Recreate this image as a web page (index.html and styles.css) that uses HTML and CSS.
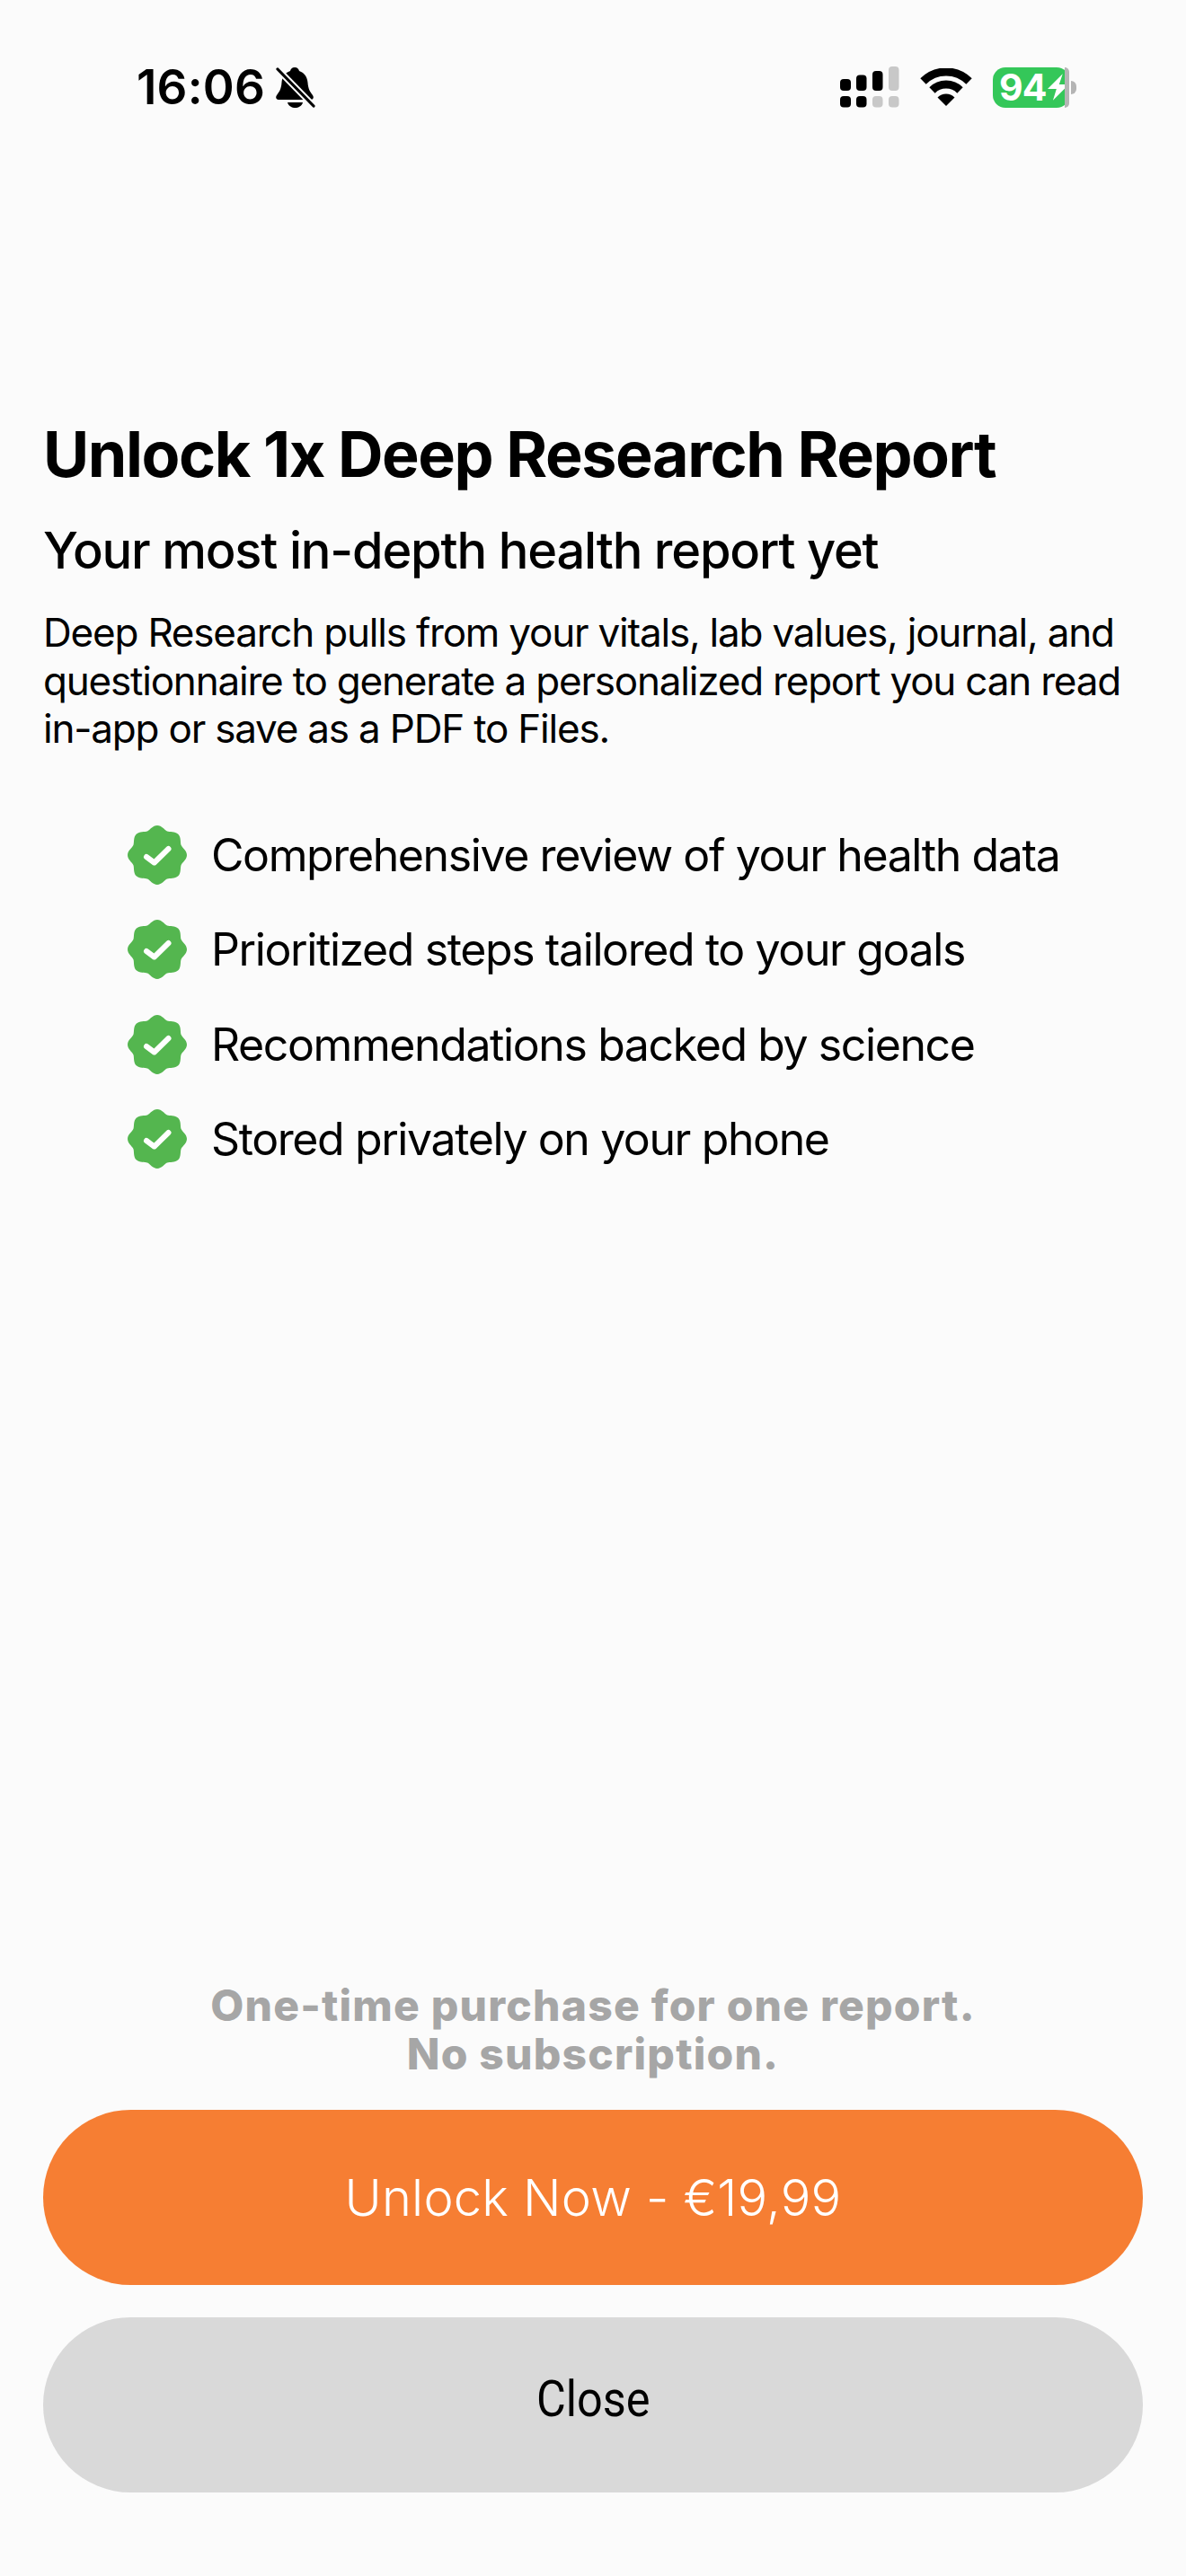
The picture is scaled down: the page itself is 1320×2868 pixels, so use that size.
FILE: index.html
```html
<!DOCTYPE html>
<html lang="en">
<head>
<meta charset="utf-8">
<title>Unlock Deep Research Report</title>
<link rel="stylesheet" href="styles.css">
</head>
<body>
<svg class="defs" width="0" height="0" aria-hidden="true">
  <symbol id="badge" viewBox="0 0 66 66">
    <path fill="#54b64f" d="M33 0C38 0 41.25 5.24 44.02 6.39C46.79 7.54 52.79 6.13 56.33 9.67C59.87 13.21 58.46 19.21 59.61 21.98C60.76 24.75 66 28 66 33C66 38 60.76 41.25 59.61 44.02C58.46 46.79 59.87 52.79 56.33 56.33C52.79 59.87 46.79 58.46 44.02 59.61C41.25 60.76 38 66 33 66C28 66 24.75 60.76 21.98 59.61C19.21 58.46 13.21 59.87 9.67 56.33C6.13 52.79 7.54 46.79 6.39 44.02C5.24 41.25 0 38 0 33C0 28 5.24 24.75 6.39 21.98C7.54 19.21 6.13 13.21 9.67 9.67C13.21 6.13 19.21 7.54 21.98 6.39C24.75 5.24 28 0 33 0Z"/>
    <path fill="none" stroke="#fff" stroke-width="6" stroke-linecap="round" stroke-linejoin="round" d="M21 35L29.7 41.5L45.5 26"/>
  </symbol>
</svg>
<main class="screen">
  <header class="status">
    <div class="status-left">
      <span class="time">16:06</span>
      <svg class="bell" viewBox="0 0 44 46" width="44" height="46">
        <path d="M21 1C24 1 25.500 3 26 5C32 7 35 12 35.500 18C36 25 38 28 41 32C42.500 34 42 37 39 37H3C0 37 -.5 34 1 32C4 28 6 25 6.500 18C7 12 10 7 16 5C16.500 3 18 1 21 1Z"/>
        <path d="M13 40H30C29 44 25 46 21.500 46C18 46 14 44 13 40Z"/>
        <path d="M2 3L42 44" stroke="#fbfbfb" stroke-width="7"/>
        <path d="M2 3L42 44" stroke="#000" stroke-width="3.200" stroke-linecap="round"/>
      </svg>
    </div>
    <div class="status-right">
      <svg class="signal" viewBox="0 0 66 46" width="66" height="46">
        <rect x="0" y="14" width="12" height="13" rx="4"/>
        <rect x="18" y="9.500" width="11.500" height="17.500" rx="4"/>
        <rect x="36" y="5" width="11.500" height="22" rx="4"/>
        <rect class="off" x="54" y="0" width="11.500" height="27" rx="4"/>
        <rect x="0" y="33" width="12" height="12.500" rx="4"/>
        <rect x="18" y="33" width="11.500" height="12.500" rx="4"/>
        <rect class="off" x="36" y="33" width="11.500" height="12.500" rx="4"/>
        <rect class="off" x="54" y="33" width="11.500" height="12.500" rx="4"/>
      </svg>
      <svg class="wifi" viewBox="0 0 58 42" width="58" height="42">
        <path d="M3.500 14.500A36 36 0 0 1 54.500 14.500" fill="none" stroke="#000" stroke-width="9"/>
        <path d="M13.500 24.500A22 22 0 0 1 44.500 24.500" fill="none" stroke="#000" stroke-width="9"/>
        <path d="M29 42L19.500 32.500A13.500 13.500 0 0 1 38.500 32.500Z"/>
      </svg>
      <div class="battery">
        <div class="cell">
          <span class="level">94</span>
          <svg class="bolt" viewBox="0 0 24 30" width="24" height="30">
            <path fill="#fff" d="M17 0L0 17H10L6 30L24 12H13Z"/>
          </svg>
          <span class="drain"></span>
        </div>
        <span class="nub"></span>
      </div>
    </div>
  </header>

  <section class="intro">
    <h1 class="title">Unlock 1x Deep Research Report</h1>
    <h2 class="subtitle">Your most in-depth health report yet</h2>
    <p class="lead">Deep Research pulls from your vitals, lab values, journal, and questionnaire to generate a personalized report you can read in-app or save as a PDF to Files.</p>
  </section>

  <ul class="features">
    <li class="feature"><svg class="check" width="66" height="66"><use href="#badge"/></svg><span>Comprehensive review of your health data</span></li>
    <li class="feature"><svg class="check" width="66" height="66"><use href="#badge"/></svg><span>Prioritized steps tailored to your goals</span></li>
    <li class="feature"><svg class="check" width="66" height="66"><use href="#badge"/></svg><span>Recommendations backed by science</span></li>
    <li class="feature"><svg class="check" width="66" height="66"><use href="#badge"/></svg><span>Stored privately on your phone</span></li>
  </ul>

  <footer class="actions">
    <p class="note">One-time purchase for one report.<br>No subscription.</p>
    <button class="btn btn-primary" type="button">Unlock Now - €19,99</button>
    <button class="btn btn-secondary" type="button"><span class="close-label">Close</span></button>
  </footer>
</main>
</body>
</html>
```

FILE: styles.css
```css
* { box-sizing: border-box; }
html, body { margin: 0; padding: 0; }
body {
  width: 1320px;
  height: 2868px;
  background: #fbfbfb;
  color: #000;
  font-family: Inter, "Liberation Sans", sans-serif;
  overflow: hidden;
}
.defs { display: block; }
.screen {
  display: flex;
  flex-direction: column;
  height: 2868px;
  padding: 0 48px 93px;
}

/* status bar */
.status {
  display: flex;
  justify-content: space-between;
  align-items: center;
  height: 46px;
  margin-top: 74px;
  padding: 0 74px 0 104px;
}
.status-left { display: flex; align-items: center; gap: 12px; }
.time { font-size: 53px; line-height: 46px; font-weight: 600; letter-spacing: 0.2px; }
.bell { display: block; }
.status-right { display: flex; align-items: center; gap: 23px; }
.signal, .wifi { display: block; }
.signal .off { fill: #c8c8c8; }
.battery { display: flex; align-items: center; gap: 2px; }
.cell {
  position: relative;
  display: flex;
  align-items: center;
  width: 85px;
  height: 45px;
  padding-left: 7px;
  border-radius: 14px;
  background: #34c759;
}
.level { color: #fff; font-size: 41px; line-height: 45px; font-weight: 700; letter-spacing: -1px; }
.bolt { display: block; margin-left: 2px; position: relative; z-index: 1; }
.drain { position: absolute; top: 0; right: 0; bottom: 0; width: 5px; border-radius: 0 14px 14px 0; background: #b4b4b4; z-index: 2; }
.nub { width: 6px; height: 15px; border-radius: 0 6px 6px 0; background: #b4b4b4; }

/* intro */
.intro { margin-top: 346px; }
.title {
  margin: 0;
  font-size: 70px;
  line-height: 80px;
  font-weight: 700;
  letter-spacing: -1.45px;
}
.subtitle {
  margin: 35px 0 0;
  font-size: 56px;
  line-height: 64px;
  font-weight: 500;
  letter-spacing: -1.2px;
}
.lead {
  margin: 33px 0 0;
  font-size: 44px;
  line-height: 53.500px;
  font-weight: 400;
  letter-spacing: -1.2px;
}

/* feature list */
.features {
  list-style: none;
  margin: 80px 0 0;
  padding: 0 0 0 94px;
  display: flex;
  flex-direction: column;
  gap: 39.500px;
}
.feature {
  display: flex;
  align-items: center;
  gap: 27px;
  height: 66px;
  font-size: 50px;
  letter-spacing: -1.4px;
}
.check { display: block; flex: none; }

/* footer */
.actions {
  margin-top: auto;
  display: flex;
  flex-direction: column;
  gap: 36px;
}
.note {
  margin: 0;
  text-align: center;
  color: #a6a6a6;
  font-size: 48px;
  line-height: 53.500px;
  font-weight: 800;
  letter-spacing: 1.2px;
}
.btn {
  display: block;
  width: 100%;
  height: 195px;
  border: 0;
  border-radius: 98px;
  font-family: inherit;
}
.btn-primary { background: #f67e33; color: #fff; font-size: 56px; font-weight: 300; letter-spacing: 0.2px; }
.btn-secondary { background: #d9d9d9; color: #000; font-family: Roboto, sans-serif; font-size: 56px; font-weight: 400; padding-bottom: 14px; }
.close-label { display: inline-block; transform: scaleX(0.9); }
```
